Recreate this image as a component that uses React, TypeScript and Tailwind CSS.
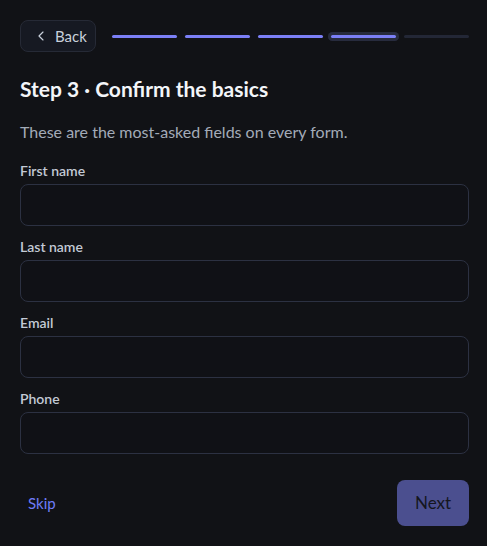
import { ChevronLeft } from "lucide-react";

const fields = ["First name", "Last name", "Email", "Phone"];

export default function App() {
  return (
    <div
      className="min-h-screen w-full bg-[#111216] pl-5 pr-[18px] pt-5 pb-5 text-white"
      style={{ fontFamily: '"Segoe UI", Lato, "Noto Sans", sans-serif' }}
    >
      <div className="flex items-center gap-4">
        <button className="flex h-8 items-center gap-1.5 rounded-lg border border-[#262a36] bg-[#161922] pl-3 pr-2 text-[15px] text-[#c9d1dc]">
          <ChevronLeft className="h-4 w-4" strokeWidth={1.75} />
          <span>Back</span>
        </button>
        <div className="flex flex-1 items-center gap-2">
          <div className="h-[3px] flex-1 rounded-full bg-[#7b7ff6]" />
          <div className="h-[3px] flex-1 rounded-full bg-[#7b7ff6]" />
          <div className="h-[3px] flex-1 rounded-full bg-[#7b7ff6]" />
          <div className="h-[3px] flex-1 rounded-full bg-[#7b7ff6] ring-[3px] ring-[#272b3d]" />
          <div className="h-[3px] flex-1 rounded-full bg-[#232736]" />
        </div>
      </div>

      <h1 className="mt-[23px] text-[21px] font-bold leading-7 text-[#f3f5f9]">
        Step 3 · Confirm the basics
      </h1>
      <p className="mt-[17px] text-[16px] leading-6 text-[#a3abb8]">
        These are the most-asked fields on every form.
      </p>

      <div className="mt-[18px] flex flex-col gap-3">
        {fields.map((f) => (
          <label key={f} className="flex flex-col gap-1">
            <span className="text-[14px] font-semibold leading-[18px] text-[#c3cad5]">
              {f}
            </span>
            <input className="h-[42px] w-full rounded-lg border border-[#2c3142] bg-[#101116] px-3 text-sm text-white outline-none" />
          </label>
        ))}
      </div>

      <div className="mt-[26px] flex items-center justify-between">
        <button className="px-2 text-[15px] text-[#6f7cf7]">Skip</button>
        <button className="h-[46px] w-[72px] rounded-lg bg-[#4b4f8f] text-[17px] text-[#15161e]">
          Next
        </button>
      </div>
    </div>
  );
}
